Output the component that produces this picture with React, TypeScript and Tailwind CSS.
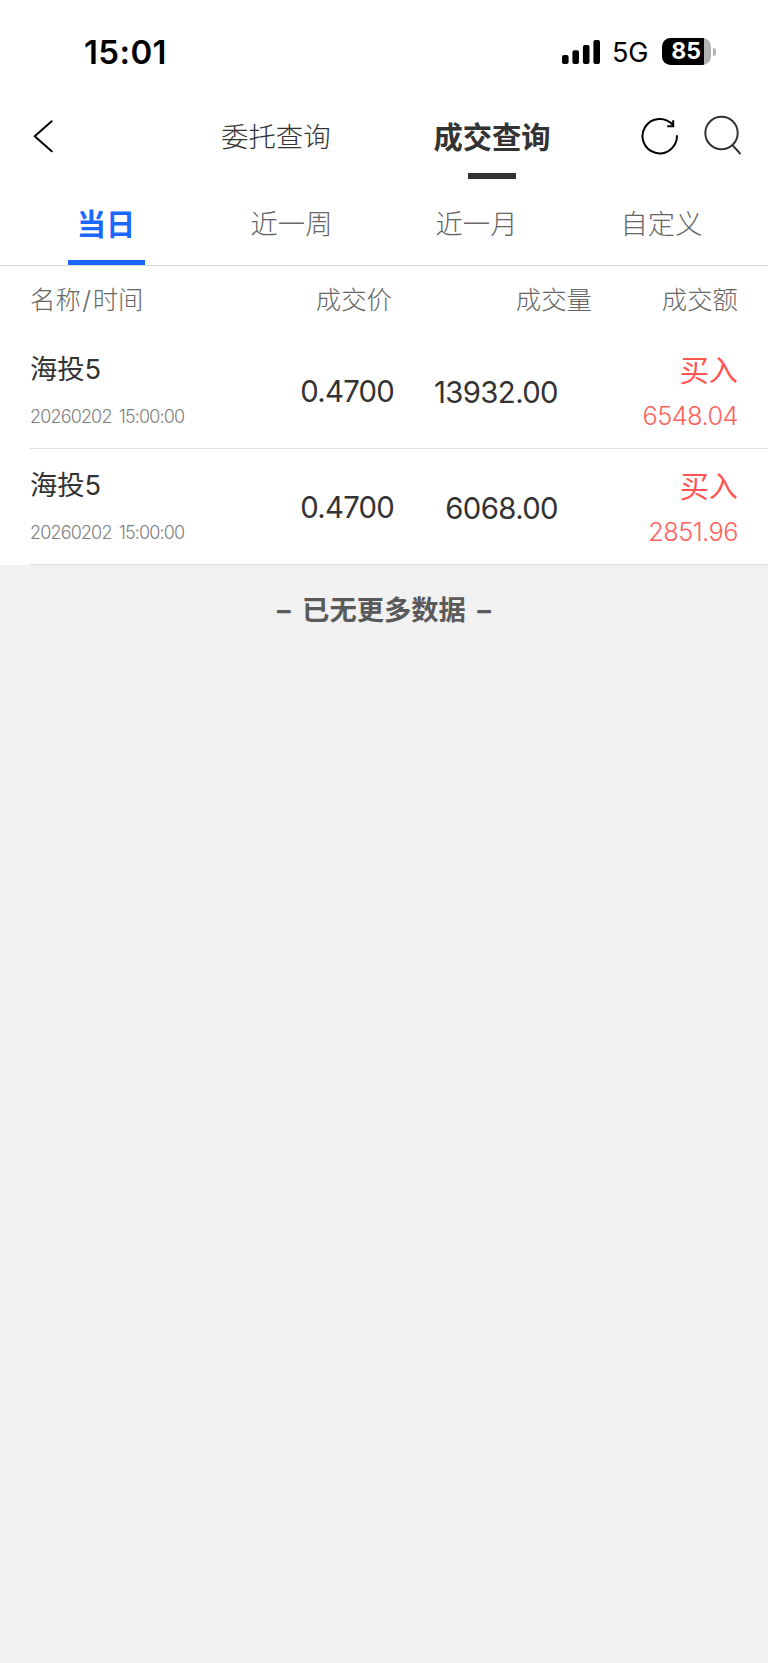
import React from "react";

type Trade = { name: string; time: string; price: string; volume: string; side: string; amount: string };

const trades: Trade[] = [
  { name: "海投5", time: "20260202 15:00:00", price: "0.4700", volume: "13932.00", side: "买入", amount: "6548.04" },
  { name: "海投5", time: "20260202 15:00:00", price: "0.4700", volume: "6068.00", side: "买入", amount: "2851.96" },
];

function StatusBar() {
  return (
    <div className="flex h-[100px] items-center justify-between pt-[3px] pr-[52px] pl-[84px] text-black">
      <span className="mt-px text-[33px] leading-none font-semibold tracking-[0.4px]">15:01</span>
      <div className="flex items-center">
        <svg className="h-[24px] w-[39px]" viewBox="0 0 39 24" fill="currentColor">
          <rect x="0" y="15" width="6.6" height="9" rx="2" />
          <rect x="10.4" y="10.2" width="6.6" height="13.8" rx="2" />
          <rect x="20.9" y="5" width="6.6" height="19" rx="2" />
          <rect x="31.4" y="0" width="6.6" height="24" rx="2" />
        </svg>
        <span className="mt-[2px] ml-[11px] w-[37px] text-[27px] leading-none tracking-[-0.2px]">5G</span>
        <div className="ml-[13px] flex h-[27px] w-[49px] items-center justify-center overflow-hidden rounded-[8.5px] bg-linear-to-r from-black from-[86%] to-[#b2b2b2] to-[86%] text-[23px] leading-none font-bold text-white">
          <span className="-ml-px">85</span>
        </div>
        <div className="ml-[2px] h-[8px] w-[3px] rounded-r-full bg-[#b2b2b2]" />
      </div>
    </div>
  );
}

function TopNav() {
  return (
    <div className="flex h-[80px] items-start pr-[25px] pl-[33px]">
      <svg className="mt-[20px] h-[33px] w-[21px] shrink-0" viewBox="0 0 21 33" fill="none" stroke="#000" strokeWidth="2" strokeLinecap="round" strokeLinejoin="round">
        <path d="M18.7 1.3 1.7 16.3 18.7 31.3" />
      </svg>
      <span className="mt-[17px] ml-[167px] w-[110px] shrink-0 text-[27.4px] leading-[40px] font-light whitespace-nowrap text-[#333]">委托查询</span>
      <div className="ml-[102px] flex w-[118px] shrink-0 flex-col items-center">
        <span className="mt-[18px] text-[29.3px] leading-[40px] font-bold whitespace-nowrap text-[#333]">成交查询</span>
        <span className="mt-[15px] h-[6px] w-[48px] bg-[#333]" />
      </div>
      <svg className="mt-[17px] ml-[90px] h-[38px] w-[38px] shrink-0" viewBox="0 0 38 38" fill="none" stroke="#000" strokeWidth="2">
        <path d="M35.9 18.2A17.2 17.2 0 1 1 32 8.2" />
        <path d="M32.2 3.2V9.2H26.2" />
      </svg>
      <svg className="mt-[15px] ml-[25px] h-[41px] w-[38px] shrink-0" viewBox="0 0 38 41" fill="none" stroke="#333" strokeWidth="2">
        <circle cx="17.5" cy="18" r="16.2" />
        <path d="M28 29.6 36.5 39" />
      </svg>
    </div>
  );
}

function RangeTabs() {
  return (
    <div className="flex h-[86px] items-stretch border-b border-[#d8d8d8] px-[13px]">
      <div className="flex w-[186px] flex-col items-center">
        <span className="mt-[25px] text-[29.2px] leading-[40px] font-bold text-[#1b68ff]">当日</span>
        <span className="mt-auto h-[5px] w-[77px] bg-[#1b68ff]" />
      </div>
      {["近一周", "近一月", "自定义"].map((label) => (
        <span key={label} className="mt-[25px] w-[185px] text-center text-[27.3px] leading-[40px] font-light text-[#666]">
          {label}
        </span>
      ))}
    </div>
  );
}

function TableHead() {
  return (
    <div className="flex h-[67px] items-center pt-[2px] pr-[30px] pl-[30px] text-[25.4px] font-light whitespace-nowrap text-[#666]">
      <span className="w-[162px]">
        名称<span className="mx-[1.5px]">/</span>时间
      </span>
      <span className="w-[200px] text-right">成交价</span>
      <span className="w-[200px] text-right">成交量</span>
      <span className="ml-auto">成交额</span>
    </div>
  );
}

function TradeRow({ trade }: { trade: Trade }) {
  return (
    <div className="ml-[30px] flex h-[116px] border-b border-[#dedede] pr-[30px] text-[#333]">
      <div className="w-[200px]">
        <div className="mt-[17px] text-[27.3px] leading-[40px]">{trade.name}</div>
        <div className="mt-[14px] text-[18px] leading-[26px] font-light tracking-[-0.85px] text-[#808080] [word-spacing:3px]">{trade.time}</div>
      </div>
      <div className="mt-[38px] w-[164px] text-right text-[29.3px] leading-[42px] tracking-[-0.75px]">{trade.price}</div>
      <div className="mt-[38.5px] w-[164px] text-right text-[29.3px] leading-[42px] tracking-[-0.6px]">{trade.volume}</div>
      <div className="ml-auto text-right">
        <div className="mt-[18px] text-[29.2px] leading-[40px] text-[#ff5552]">{trade.side}</div>
        <div className="mt-[8px] text-[25.4px] leading-[34px] font-light tracking-[-0.55px] text-[#ff6360]">{trade.amount}</div>
      </div>
    </div>
  );
}

export default function App() {
  return (
    <div className="min-h-[1663px] w-[768px] overflow-hidden bg-[#f1f1f1] font-['Inter','Noto_Sans_CJK_SC',sans-serif]">
      <div className="bg-white">
        <StatusBar />
        <TopNav />
        <RangeTabs />
        <TableHead />
        {trades.map((trade) => (
          <TradeRow key={trade.volume} trade={trade} />
        ))}
      </div>
      <div className="mt-[26px] text-center text-[27.3px] leading-[40px] font-bold text-[#5a5a5a] [word-spacing:5px]">– 已无更多数据 –</div>
    </div>
  );
}
